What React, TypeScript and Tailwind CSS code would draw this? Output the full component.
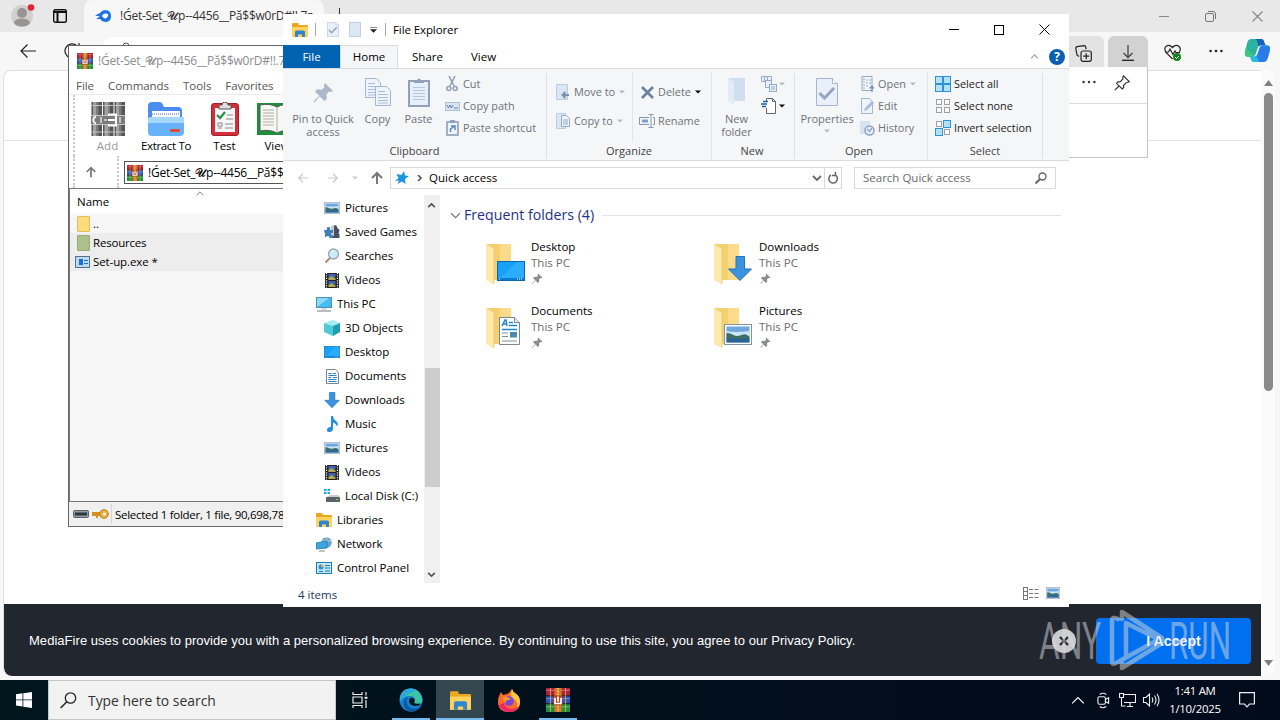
import type { ReactNode } from 'react'
import clsx from 'clsx'

type IconProps = { className?: string }

const ARCHIVE = '!Ǵet-Set_𝓤p--4456__Pă$$w0rD#!!.7z'

/* ---------- icons ---------- */

function WinRar({ className }: IconProps) {
  return (
    <svg viewBox="0 0 16 16" className={className}>
      <rect x="0" y="0" width="16" height="5.2" fill="#b01c3c" />
      <rect x="0" y="5.4" width="16" height="5" fill="#2b52bd" />
      <rect x="0" y="10.6" width="16" height="5.4" fill="#1f8f3c" />
      <path d="M0 1.6h16M0 7h16M0 12.4h16" stroke="#fff" strokeOpacity=".3" strokeWidth=".8" />
      <path d="M0 5.2h16M0 10.5h16" stroke="#222" strokeWidth=".7" />
      <path d="M3 0v16M13 0v16" stroke="#e9b44c" strokeOpacity=".7" strokeWidth=".8" />
      <rect x="5.6" width="4.8" height="16" fill="#cf7a28" />
      <path d="M8 0v5M8 12v4" stroke="#f5c162" strokeWidth="1.3" strokeDasharray="1 .8" />
      <rect x="5" y="5" width="6" height="6.4" fill="#b3471e" />
      <path d="M6 6.5v3.8h4V6.5M8 5.6v3.5" fill="none" stroke="#fff" strokeWidth="1.1" />
    </svg>
  )
}

function GrayArchive() {
  return (
    <svg viewBox="0 0 34 34" className="size-[34px]">
      {[0, 11.5, 23].map((x) => (
        <g key={x}>
          <rect x={x + 0.5} y="0" width="10.5" height="34" fill="#555" />
          <rect x={x + 2} y="0" width="3.5" height="34" fill="#a2a2a2" />
          <rect x={x + 5.5} y="0" width="2" height="34" fill="#7c7c7c" />
          <path d={`M${x + 0.5} 3.5h10.5M${x + 0.5} 30h10.5`} stroke="#c4c4c4" />
        </g>
      ))}
      <rect x="0" y="13" width="34" height="10" fill="#7b7b7b" />
      <path d="M0 13.5h34M0 22.5h34" stroke="#c8c8c8" />
      <path d="M5 14.5c-3.500 1-3.500 6 0 7" fill="none" stroke="#f0f0f0" strokeWidth="2" />
      <path d="M10 15v6M13 18h3M29 15v6" stroke="#e0e0e0" strokeWidth="1.5" />
      <path d="M17 12.500h8v11h-8M17 18h7" fill="none" stroke="#fff" strokeWidth="2" />
    </svg>
  )
}

function ExtractIcon() {
  return (
    <svg viewBox="0 0 36 34" className="h-[34px] w-9">
      <path d="M0 4q0-4 4-4h7q3 0 4 3l1 2h14q4 0 4 4v20H0z" fill="#4b8cf0" />
      <rect x="4" y="9" width="28" height="9" fill="#fff" />
      <path d="M4 12h28" stroke="#9fb4d8" strokeWidth="2" strokeDasharray="1 1" />
      <path d="M0 17q0-2 3-2h30q3 0 3 2v13q0 4-4 4H4q-4 0-4-4z" fill="#67b2f8" />
      <path d="M0 17q0-2 3-2h30q3 0 3 2v4H0z" fill="#a6d8fd" />
      <rect x="22" y="27" width="10" height="3" rx="1" fill="#e44a31" />
    </svg>
  )
}

function TestIcon() {
  return (
    <svg viewBox="0 0 28 34" className="h-[34px] w-7">
      <rect x=".5" y="1.5" width="27" height="32" rx="2.5" fill="#d62d3a" stroke="#a01f2b" />
      <rect x="4" y="6" width="20" height="24" fill="#f7f7f7" />
      <path d="M8 7V3h3q0-3 3-3t3 3h3v4z" fill="#ddd" stroke="#555" />
      <path d="M6 13l3 3 5-6" fill="none" stroke="#27924a" strokeWidth="2.2" />
      <path d="M16 13h6M15 17h7M7 26h4M14 22h8M14 26h8" stroke="#888" />
      <rect x="7" y="21" width="4" height="3" fill="none" stroke="#888" />
    </svg>
  )
}

function ViewIcon() {
  return (
    <svg viewBox="0 0 40 34" className="h-[34px] w-10">
      <path d="M0 1h40v32H0z" fill="#1d8f3b" />
      <path d="M3 3q10-2 17 2q7-4 17-2v26q-10-2-17 2q-7-4-17-2z" fill="#f8f8f2" stroke="#555" />
      <path d="M6 8h11M6 11h11M6 14h11M6 17h11M6 20h11M6 23h11M20 5v26" stroke="#aaa" />
    </svg>
  )
}

function ExplorerIcon({ className }: IconProps) {
  return (
    <svg viewBox="0 0 16 14" className={className}>
      <path d="M0 1q0-1 1-1h5l1 2h8q1 0 1 1v11H0z" fill="#e9a820" />
      <path d="M0 4h16v10H0z" fill="#ffd35c" />
      <path d="M3 14V9q0-1.5 1.5-1.500h7Q13 7.500 13 9v5h-3v-2.500H6V14z" fill="#2f86cf" />
    </svg>
  )
}

function PictureIcon({ className }: IconProps) {
  return (
    <svg viewBox="0 0 28 21" className={className} preserveAspectRatio="none">
      <rect x=".5" y=".5" width="27" height="20" fill="#fff" stroke="#8194a5" />
      <rect x="2.5" y="2.5" width="23" height="16" fill="#6ea8e0" />
      <path d="M2.500 7q8 2 23 0v5h-23z" fill="#cbe6f7" />
      <path d="M2.500 9q4 0 7 2t8 0 8 2v2h-23z" fill="#3d6f62" />
      <path d="M2.500 14.500h23v4h-23z" fill="#2b6394" />
    </svg>
  )
}

function DocumentIcon({ className }: IconProps) {
  return (
    <svg viewBox="0 0 21 28" className={className}>
      <path d="M.5.5h15l5 5v22H.5z" fill="#fff" stroke="#7b8790" />
      <path d="M15.500.5v5h5" fill="#e8eef3" stroke="#7b8790" />
      <path d="M3 9l3-6h1l1 6M4.500 7H7.500M10 5.500h4M10 8.500h8M3 12.500h15" fill="none" stroke="#1e86d0" strokeWidth="1.500" />
      <path d="M3 16h6M3 19.500h6M3 24h15" stroke="#7d8fa5" strokeWidth="1.200" />
      <rect x="11" y="15" width="7" height="5.500" fill="#4b8aae" />
    </svg>
  )
}

function SmallDocumentIcon() {
  return (
    <svg viewBox="0 0 13 15" className="h-[15px] w-[13px]">
      <path d="M.5.5h9l3 3v11H.5z" fill="#fff" stroke="#7b8790" />
      <path d="M2.500 4.500h3M7 4.500h3M2.500 6.500h8M2.500 8.500h3M7 8.500h4M2.500 10.500h8M2.500 12.500h8" stroke="#2a86c8" />
    </svg>
  )
}

function DesktopIcon({ className }: IconProps) {
  return (
    <svg viewBox="0 0 28 20" className={className} preserveAspectRatio="none">
      <rect x=".5" y=".5" width="27" height="19" fill="#17a1f8" stroke="#0b67b0" />
      <path d="M1 19L20 1h7v18z" fill="#2badfb" />
      <path d="M1 17h26v2H1z" fill="#0a7ed2" />
      <path d="M2 18h2M20 18h6" stroke="#fff" strokeDasharray="1 1" />
    </svg>
  )
}

function DownIcon({ className }: IconProps) {
  return (
    <svg viewBox="0 0 24 25" className={className}>
      <path d="M8 .5h8.500V13H23.500L12 24.500.5 13H8z" fill="#3a93dc" stroke="#2373b8" />
    </svg>
  )
}

function VideoIcon({ className }: IconProps) {
  return (
    <svg viewBox="0 0 14 15" className={className}>
      <rect width="14" height="15" fill="#222" />
      <path d="M1.500 0v15M12.500 0v15" stroke="#eee" strokeWidth="1.300" strokeDasharray="1.200 1.200" />
      <rect x="3.500" y="1" width="7" height="6" fill="#4264b8" />
      <rect x="3.500" y="8" width="7" height="6" fill="#3d61ae" />
      <path d="M3.500 5l3-2 4 3v1h-7zM3.500 12l3-2 4 3v1h-7z" fill="#b0a84a" />
    </svg>
  )
}

function GamesIcon({ className }: IconProps) {
  return (
    <svg viewBox="0 0 16 14" className={className}>
      <path d="M9 1l3-1 1.500 3 2 2-1 4h1v4H9z" fill="#46525c" />
      <path d="M7 1l3-1v11H7z" fill="#c4ccd2" />
      <path d="M0 5h3q-1-3 1.500-3T6 5h3v3q-2-1-2 1t2 1v3H5q1-2-1-2t-2 1H1V9z" fill="#3a7fc0" />
    </svg>
  )
}

function SearchesIcon({ className }: IconProps) {
  return (
    <svg viewBox="0 0 16 16" className={className}>
      <path d="M6.500 9.500L1.500 14.500" stroke="#b08a6a" strokeWidth="2" />
      <circle cx="9.500" cy="6" r="5" fill="#cdeafa" stroke="#95a5b2" strokeWidth="1.300" />
      <path d="M7 5q1-2 3-2" stroke="#fff" fill="none" />
    </svg>
  )
}

function PcIcon({ className }: IconProps) {
  return (
    <svg viewBox="0 0 16 15" className={className}>
      <rect x=".5" y=".5" width="15" height="10" fill="#45bdf2" stroke="#4d8fb3" />
      <path d="M1 10V1h12z" fill="#8adafa" />
      <path d="M5 12h6" stroke="#b0bcc4" />
      <path d="M1 14h14" stroke="#6e7b84" />
    </svg>
  )
}

function CubeIcon({ className }: IconProps) {
  return (
    <svg viewBox="0 0 16 16" className={className}>
      <path d="M0 3l9-3 7 3-7 3z" fill="#a4eef2" />
      <path d="M0 3l9 3v10l-9-4z" fill="#4fcbd6" />
      <path d="M16 3L9 6v10l7-4z" fill="#1f9fb4" />
    </svg>
  )
}

function MusicIcon({ className }: IconProps) {
  return (
    <svg viewBox="0 0 12 16" className={className}>
      <path d="M5 0h2q0 3 3 5t1 6q0-3-4-4.500V13q-.5 3-3.500 3T1 13.500 4 11h1z" fill="#1f8fdf" />
    </svg>
  )
}

function DiskIcon({ className }: IconProps) {
  return (
    <svg viewBox="0 0 16 14" className={className}>
      <path d="M0 0h2.500v2H0zM3.500 0H6v2H3.500zM0 3h2.500v2H0zM3.500 3H6v2H3.500z" fill="#18a8e0" />
      <path d="M3 8l3-2h8l2 2z" fill="#c7ccd0" />
      <rect x="2" y="8" width="14" height="5" rx=".8" fill="#5a6268" />
      <rect x="12" y="10" width="2" height="1" fill="#5df05d" />
    </svg>
  )
}

function NetworkIcon({ className }: IconProps) {
  return (
    <svg viewBox="0 0 16 15" className={className}>
      <circle cx="10.500" cy="5.500" r="5.200" fill="#6aa5c8" />
      <path d="M6 4h10M10.500 0v10" stroke="#c3e0ef" strokeWidth=".8" />
      <path d="M0 6l11-2v7L0 12z" fill="#3aa5e0" stroke="#2475a8" strokeWidth=".8" />
      <path d="M3 14h6" stroke="#7c8990" />
    </svg>
  )
}

function ControlIcon({ className }: IconProps) {
  return (
    <svg viewBox="0 0 16 12" className={className}>
      <rect x=".5" y=".5" width="15" height="11" fill="#bfe6fa" stroke="#1f7fb8" />
      <circle cx="5" cy="5" r="2.500" fill="#2b92d0" />
      <path d="M5 5V2.500A2.500 2.500 0 0 1 7.500 5z" fill="#f5a742" />
      <path d="M9 3.500h5M9 6h5M3 9.500h4M9 9h5" stroke="#2878ac" />
    </svg>
  )
}

function Pin({ className }: IconProps) {
  return (
    <svg viewBox="0 0 22 22" className={className}>
      <path d="M12.500 1l8.500 8.500-2.500 1-2-.3-2.500 3 .5 4.300L12 20l-5-5-5.500 6.500L.5 20.500 6.500 14.500 2 10l2.500-2.500 4.500.5 3-2.500-.5-2z" fill="currentColor" />
    </svg>
  )
}

function Caret({ className }: IconProps) {
  return (
    <svg viewBox="0 0 6 4" className={clsx('h-1 w-1.5 shrink-0', className)}>
      <path d="M0 .5h6L3 3.500z" fill="currentColor" />
    </svg>
  )
}

function Chevron({ className, d = 'M1 1l4 4 4-4', w = 1.6 }: IconProps & { d?: string; w?: number }) {
  return (
    <svg viewBox="0 0 10 6" className={className}>
      <path d={d} fill="none" stroke="currentColor" strokeWidth={w} />
    </svg>
  )
}

function Arrow({ className, dir }: IconProps & { dir: 'left' | 'right' | 'up' }) {
  const d = { left: 'M13 7H2M7 2L2 7l5 5', right: 'M1 7h11M7 2l5 5-5 5', up: 'M7 13V2M2 7l5-5 5 5' }[dir]
  return (
    <svg viewBox="0 0 14 14" className={className}>
      <path d={d} fill="none" stroke="currentColor" strokeWidth={dir === 'up' ? 2 : 1.4} />
    </svg>
  )
}

function Folder({ children }: { children: ReactNode }) {
  return (
    <div className="relative h-[42px] w-10 shrink-0">
      <svg viewBox="0 0 40 42" className="h-[42px] w-10">
        <path d="M0 1h25v36H5z" fill="#f3d070" />
        <path d="M25 1v36H14V1z" fill="#f9db8a" />
        <path d="M0 1l8 5v35.500L0 37z" fill="#fde9ab" />
        <path d="M8 6v35" stroke="#e8c463" strokeWidth=".7" />
      </svg>
      {children}
    </div>
  )
}

/* ---------- Edge ---------- */

function Edge() {
  return (
    <div className="absolute inset-x-0 top-0 flex h-[680px] flex-col bg-[#f7f7f7]">
      <div className="flex h-8 shrink-0 items-center justify-between bg-[#e8e8e8]">
        <div className="flex h-8 items-center">
          <svg viewBox="0 0 26 26" className="ml-[9px] size-[26px]">
            <circle cx="13" cy="13" r="11" fill="#d2d0ce" />
            <circle cx="13" cy="10" r="5" fill="#979593" />
            <ellipse cx="13" cy="19.500" rx="8" ry="4" fill="#979593" />
            <circle cx="22" cy="4.500" r="3.300" fill="#e02434" />
          </svg>
          <svg viewBox="0 0 14 14" className="ml-[18px] size-[14px]">
            <rect x=".7" y=".7" width="12.600" height="12.600" rx="1.500" fill="none" stroke="#111" strokeWidth="1.400" />
            <path d="M1 3h12M4.500 3v10" stroke="#111" strokeWidth="2" />
          </svg>
          <div className="ml-[17px] flex h-8 w-[240px] items-center overflow-hidden rounded-t-lg bg-[#f7f7f7] pl-[11px]">
            <svg viewBox="0 0 16 12" className="h-3 w-4 shrink-0">
              <path d="M0 5.500L5 3Q7 0 10 0q6 0 6 6t-6 6q-3 0-5-3L1 9l4-2.500z" fill="#1d72e8" />
              <path d="M7 6q1-3 4-2.500T13 6t-2.500 2.500T7 6z" fill="#fff" />
            </svg>
            <span className="ml-[9px] text-[12px] tracking-[-0.25px] whitespace-nowrap text-[#333]">{ARCHIVE}</span>
          </div>
          <span className="ml-[15px] h-4 w-px bg-[#333]" />
        </div>
        <div className="flex items-center gap-9 pr-[17px] text-[#888]">
          <span className="h-px w-2.5 bg-[#888]" />
          <svg viewBox="0 0 11 11" className="size-[11px]" fill="none" stroke="#777">
            <rect x=".5" y="2.500" width="8" height="8" rx="1.500" />
            <path d="M3 .5h5q2.500 0 2.500 2.500v5" />
          </svg>
          <svg viewBox="0 0 11 11" className="size-[11px]">
            <path d="M.5.5l10 10M10.500.5l-10 10" stroke="#888" strokeWidth="1.200" />
          </svg>
        </div>
      </div>

      <div className="flex h-[38px] shrink-0 items-center justify-between">
        <div className="flex items-center self-stretch">
          <svg viewBox="0 0 16 14" className="ml-5 h-3.5 w-4">
            <path d="M16 7H1M7.500.5L1 7l6.500 6.500" fill="none" stroke="#222" strokeWidth="1.200" />
          </svg>
          <svg viewBox="0 0 16 16" className="ml-7 size-4">
            <path d="M15 8a7 7 0 1 1-2-5M15 0v4h-4" fill="none" stroke="#222" strokeWidth="1.200" />
          </svg>
          <div className="ml-[21px] flex h-7 w-[700px] items-center self-center rounded-full bg-white pl-5 text-[#444]">
            <svg viewBox="0 0 10 14" className="-mt-1 h-3.5 w-2.5">
              <path d="M2 7V4q0-3 3-3t3 3v3M1 7h8v6H1z" fill="none" stroke="#555" />
            </svg>
          </div>
        </div>
        <div className="flex h-full items-end">
          <div className="flex h-[34px] w-[45px] items-center justify-center rounded-t-md bg-[#e3e3e3] pl-1">
            <svg viewBox="0 0 17 17" className="size-[17px]" fill="none" stroke="#222" strokeWidth="1.200">
              <path d="M4 11.500L2 10 .8 3.500Q.7 2 2 1.700L9 .7q1.500 0 1.800 1.500l.2 2" />
              <rect x="6" y="6" width="10.300" height="10.300" rx="2" />
              <path d="M11.200 8.300v6M8.200 11.200h6" />
            </svg>
          </div>
          <div className="ml-1 flex h-[34px] w-10 items-center justify-center rounded-t-md bg-[#d2d2d2]">
            <svg viewBox="0 0 14 16" className="h-4 w-3.5">
              <path d="M7 0v12M2.500 8L7 12.500 11.500 8" fill="none" stroke="#444" strokeWidth="1.300" />
              <path d="M1 15.300h12" stroke="#222" strokeWidth="1.300" />
            </svg>
          </div>
          <svg viewBox="0 0 17 17" className="mb-[9px] ml-4 size-[17px]">
            <path d="M8.500 15L2 8.500Q-.5 4 2.500 2T8.500 3.500Q11.500 0 14.500 2T15.500 8M1 8h3.500L6 5l3 5.500L11 7l1 1.500h4" fill="none" stroke="#222" strokeWidth="1.200" />
            <circle cx="13" cy="13" r="4" fill="#16821c" />
            <path d="M11 13l1.500 1.500L15 12" stroke="#fff" fill="none" />
          </svg>
          <svg viewBox="0 0 14 4" className="mb-[17px] ml-7 h-1 w-3.5" fill="#222">
            <circle cx="1.600" cy="2" r="1.300" />
            <circle cx="7" cy="2" r="1.300" />
            <circle cx="12.400" cy="2" r="1.300" />
          </svg>
          <svg viewBox="0 0 24 24" className="mr-2.5 mb-[7px] ml-[22px] size-[25px]">
            <path d="M6 1h9q3 0 3 3l1 3h-4q-2 0-3 3l-2 6q-1 2-3 2H3q-4 0-3-5l2-8q1-4 4-4z" fill="#2bb3a0" />
            <path d="M12 1h3q3 0 3.500 3L20 7h-5l-2 1q-.5-2-1-4-.5-2-2-3z" fill="#1762b8" />
            <path d="M0 14q.5-3 1-5 5 6 8 8-1 1-2 1H3q-4 0-3-4z" fill="#38c878" />
            <path d="M18 23H9q-3 0-3-3l-1-2h4q2 0 3-3l2-6q1-2 3-2h4q4 0 3 5l-2 7q-1 4-4 4z" fill="#2b7ce9" />
            <path d="M12 23H9q-3 0-3.500-3L5 18h4l2-1q.5 2 1 3 .5 2 2 3z" fill="#22bfe0" />
          </svg>
        </div>
      </div>

      <div className="flex h-[606px] shrink-0">
        <div className="ml-[3px] flex w-[1258px] flex-col overflow-hidden rounded-tl-lg rounded-bl-lg border-t border-l border-[#dedede] bg-white">
          <div className="h-[70px] shrink-0 border-b border-[#e4e4e4]" />
          <div className="h-[463px] shrink-0" />
          <div className="flex h-[72px] shrink-0 items-center rounded-bl-lg bg-[#22262f] pt-0.5 pl-[25px]">
            <span className="w-[1023px] font-['Liberation_Sans'] text-[13px] tracking-[0.04px] whitespace-nowrap text-white">
              MediaFire uses cookies to provide you with a personalized browsing experience. By continuing to use this site, you agree to our Privacy Policy.
            </span>
            <span className="flex size-6 shrink-0 items-center justify-center rounded-full bg-[#c9cacc]">
              <svg viewBox="0 0 10 10" className="size-2.5">
                <path d="M1 1l8 8M9 1L1 9" stroke="#222" strokeWidth="2.200" />
              </svg>
            </span>
            <span className="ml-5 flex h-[46px] w-[155px] shrink-0 items-center justify-center rounded bg-[#0070f0] font-['Liberation_Sans'] text-[14px] font-bold tracking-[0.1px] text-white">
              I Accept
            </span>
          </div>
        </div>
        <div className="flex w-[14px] flex-col items-center rounded-r-lg bg-[#fbfbfb]">
          <svg viewBox="0 0 9 6" className="mt-2.5 h-1.5 w-[9px]"><path d="M0 6h9L4.500 0z" fill="#808080" /></svg>
          <div className="mt-[7px] h-[298px] w-[9px] rounded-full bg-[#8a8a8a]" />
          <svg viewBox="0 0 9 6" className="mt-auto mb-2.5 h-1.5 w-[9px]"><path d="M0 0h9L4.500 6z" fill="#808080" /></svg>
        </div>
      </div>
    </div>
  )
}

function DownloadsFlyout() {
  return (
    <div className="absolute top-[67px] left-[868px] flex h-[91px] w-[280px] flex-col border-r border-b border-[#c4c4c4] bg-white">
      <div className="flex h-[37px] items-start justify-end border-b border-[#dcdcdc] pr-[17px]">
        <svg viewBox="0 0 14 4" className="mt-[13px] mr-[18px] h-1 w-3.5" fill="#333">
          <circle cx="1.600" cy="2" r="1.200" />
          <circle cx="7" cy="2" r="1.200" />
          <circle cx="12.400" cy="2" r="1.200" />
        </svg>
        <svg viewBox="0 0 16 16" className="mt-2 size-4">
          <path d="M9.500.8l5.700 5.700-1.500 1-1.500.2-2.700 2.800.2 2-1.500 1.500L2.500 8.300 4 6.800l2 .1 2.800-2.700.1-2zM5 11L.8 15.200" fill="none" stroke="#333" strokeWidth="1.200" />
        </svg>
      </div>
    </div>
  )
}

/* ---------- WinRAR ---------- */

function ToolButton({ icon, label, className }: { icon: ReactNode; label: string; className?: string }) {
  return (
    <div className={clsx('flex shrink-0 flex-col items-center text-[11.5px]', className)}>
      {icon}
      <span className="mt-0.5 leading-[16px] whitespace-nowrap">{label}</span>
    </div>
  )
}

function WinRarWindow() {
  return (
    <div className="absolute top-[45px] left-[68px] flex h-[482px] w-[420px] flex-col overflow-hidden border border-[#666] bg-white text-[11.5px] text-black">
      <div className="flex h-[30px] shrink-0 items-center pl-2 text-[12px] tracking-[-0.25px] text-[#8c8c8c]">
        <WinRar className="size-4" />
        <span className="ml-[5px] whitespace-nowrap">{ARCHIVE}</span>
      </div>
      <div className="flex h-[19px] shrink-0 items-center gap-3.5 border-b border-[#ececec] pt-px pl-[7px] tracking-[-0.05px] text-[#555]">
        <span>File</span>
        <span>Commands</span>
        <span>Tools</span>
        <span>Favorites</span>
      </div>
      <div className="ml-1 flex h-[61px] shrink-0 border-l-2 border-dotted border-[#c9c9c9] pt-[7px] pl-px">
        <ToolButton className="w-[63px] text-[#999]" icon={<GrayArchive />} label="Add" />
        <ToolButton className="w-[54px] tracking-[-0.35px]" icon={<ExtractIcon />} label="Extract To" />
        <ToolButton className="w-[63px]" icon={<TestIcon />} label="Test" />
        <ToolButton className="w-[42px]" icon={<ViewIcon />} label="View" />
      </div>
      <div className="ml-1 flex h-8 shrink-0 items-center border-l-2 border-dotted border-[#c9c9c9]">
        <Arrow dir="up" className="ml-2.5 size-3 text-[#777]" />
        <div className="ml-5 flex h-full items-center border-l-2 border-dotted border-[#c9c9c9] pt-px pl-[5px]">
          <div className="flex h-[23px] w-[320px] items-center border border-[#555] pl-[2px] text-[12px] tracking-[-0.25px]">
            <WinRar className="size-4" />
            <span className="ml-[5px] whitespace-nowrap">{ARCHIVE}</span>
          </div>
        </div>
      </div>
      <div className="flex h-[314px] shrink-0 flex-col border-y border-l border-[#777] bg-[#f6f6f6]">
        <div className="flex h-[25px] items-start bg-white pl-[7px]">
          <span className="w-[118px] pt-1 leading-[17px]">Name</span>
          <Chevron d="M1 5l4-4 4 4" w={1} className="mt-0.5 h-[5px] w-[10px] text-[#666]" />
        </div>
        <div className="flex h-[19px] items-center gap-[3px] pl-[7px]">
          <span className="h-4 w-[13px] rounded-[1px] border border-[#e2bd55] bg-[#fbdc7c]" />
          <span>..</span>
        </div>
        <div className="flex h-[19px] items-center gap-[3px] bg-[#ededed] pl-[7px] tracking-[-0.2px]">
          <span className="h-4 w-[13px] rounded-[1px] border border-[#98aa78] bg-[#adc08c]" />
          <span>Resources</span>
        </div>
        <div className="flex h-[19px] items-center gap-[3px] bg-[#ededed] pl-[5px] tracking-[-0.1px]">
          <svg viewBox="0 0 15 12" className="h-3 w-[15px]">
            <rect x=".5" y=".5" width="14" height="11" fill="#bcd9ee" stroke="#54748c" />
            <rect x="4" y="3" width="4" height="6" fill="#1370d0" />
            <path d="M9 4.500h4M9 7.500h4" stroke="#1370d0" />
          </svg>
          <span>Set-up.exe *</span>
        </div>
      </div>
      <div className="flex grow items-center bg-[#f0f0f0] pl-1">
        <svg viewBox="0 0 16 8" className="h-2 w-4">
          <rect x=".5" y=".5" width="15" height="7" rx="1" fill="#8f9ba5" stroke="#59636b" />
          <path d="M2 4h12" stroke="#2b3640" strokeWidth="3" />
        </svg>
        <svg viewBox="0 0 17 10" className="ml-[3px] h-2.5 w-[17px]">
          <path d="M0 3h9v4H6v2H4V7H0z" fill="#d99022" />
          <circle cx="12" cy="5" r="4.300" fill="#eeb144" stroke="#b97716" />
          <circle cx="12.500" cy="5" r="1.500" fill="#fff" />
        </svg>
        <span className="ml-0.5 flex h-5 items-center border-l border-[#d5d5d5] pt-0.5 pl-[3px] tracking-[-0.28px] whitespace-nowrap">
          Selected 1 folder, 1 file, 90,698,784 bytes
        </span>
      </div>
    </div>
  )
}

/* ---------- File Explorer ---------- */

function RibbonGroup({ label, className, children }: { label: string; className: string; children: ReactNode }) {
  return (
    <div className={clsx('mt-1 mb-0.5 flex h-[86px] shrink-0 flex-col border-r border-[#dfe3e7]', className)}>
      <div className="flex h-[69px]">{children}</div>
      <span className="text-center text-[11px] leading-[17px] text-[#444]">{label}</span>
    </div>
  )
}

function SmallButton({ icon, label, caret }: { icon: ReactNode; label?: string; caret?: string }) {
  return (
    <div className="flex h-[22px] items-center text-[10.9px] whitespace-nowrap">
      <span className="mr-[3px] flex w-4 shrink-0 justify-center">{icon}</span>
      {label}
      {caret && <Caret className={clsx(label ? 'ml-1' : '-ml-px', caret)} />}
    </div>
  )
}

function BigButton({ icon, label, className, caret }: { icon: ReactNode; label: string; className: string; caret?: boolean }) {
  return (
    <div className={clsx('flex shrink-0 flex-col items-center pt-[3px] text-center text-[11px] leading-[13px] text-[#6d7278]', className)}>
      <span className="mb-1 flex h-8 items-center">{icon}</span>
      {label}
      {caret && <Caret className="mt-1 text-[#b4b8bd]" />}
    </div>
  )
}

function Sheet({ className, check }: IconProps & { check?: boolean }) {
  return (
    <svg viewBox="0 0 22 28" className={className}>
      <path d="M.5.5h16l5 5v22H.5z" fill="#e9f0fa" stroke="#a5b6d2" />
      <path d="M16.500.5v5h5" fill="#fff" stroke="#a5b6d2" />
      {check && <path d="M3.500 15l5 5 9.500-10" fill="none" stroke="#94a6c4" strokeWidth="3" />}
    </svg>
  )
}

function TextSheet({ className }: IconProps) {
  return (
    <svg viewBox="0 0 16 20" className={className}>
      <path d="M.5.5h11l4 4v15H.5z" fill="#eef4fc" stroke="#a5b6d2" />
      <path d="M3 5.500h7M3 8.500h10M3 11.500h10M3 14.500h10M3 17h10" stroke="#a9bbdb" />
    </svg>
  )
}

function SelectIcon({ on }: { on: boolean[] }) {
  return (
    <span className="grid grid-cols-2">
      {on.map((v, i) => (
        <span
          key={i}
          className={clsx('border', v ? 'size-2 border-[#2b93d8] bg-[#b5e0fa]' : 'm-px size-1.5 border-[#a0a0a0] bg-white')}
        />
      ))}
    </span>
  )
}

function Ribbon() {
  const dim = 'text-[#6d7278]'
  return (
    <div className="flex h-[93px] shrink-0 border-y border-[#d9dcdf] bg-[#f5f6f8]">
      <RibbonGroup label="Clipboard" className="w-[264px]">
        <BigButton className="w-20" icon={<Pin className="size-[21px] text-[#aab8c8]" />} label="Pin to Quick access" />
        <BigButton
          className="w-[29px]"
          icon={
            <span className="flex">
              <TextSheet className="-mr-1.5 mb-2 h-5 w-4" />
              <TextSheet className="mt-2 h-5 w-4" />
            </span>
          }
          label="Copy"
        />
        <BigButton
          className="w-[53px]"
          icon={
            <svg viewBox="0 0 22 29" className="h-[29px] w-[22px]">
              <rect x="1" y="3" width="20" height="25" fill="#e6effb" stroke="#8fa0b8" strokeWidth="2" />
              <path d="M6 5V2h3q2-3 4 0h3v3z" fill="#8fa0b8" />
              <path d="M5 9.500h12M5 12.500h12M5 15.500h12M5 18.500h12M5 21.500h12" stroke="#b4c6e0" />
            </svg>
          }
          label="Paste"
        />
        <div className={clsx('-ml-px flex flex-col', dim)}>
          <SmallButton
            label="Cut"
            icon={
              <svg viewBox="0 0 12 16" className="h-4 w-3" fill="none" stroke="#93a3b5" strokeWidth="1.600">
                <path d="M3 0l5 10M9 0L4 10" />
                <circle cx="2.800" cy="12.500" r="2" />
                <circle cx="9.200" cy="12.500" r="2" />
              </svg>
            }
          />
          <SmallButton
            label="Copy path"
            icon={
              <svg viewBox="0 0 15 9" className="h-[9px] w-[15px]">
                <rect x=".5" y=".5" width="14" height="8" fill="#d9e4f3" stroke="#b1c0d5" />
                <path d="M2 3l1.500 3L5 3l1.500 3L8 3M9 6h4" fill="none" stroke="#6680a5" />
              </svg>
            }
          />
          <SmallButton
            label="Paste shortcut"
            icon={
              <svg viewBox="0 0 13 16" className="h-4 w-[13px]">
                <rect x="1" y="2" width="11" height="13" fill="#eef4fc" stroke="#8fa0b8" strokeWidth="1.600" />
                <rect x="4" y="0" width="5" height="3" fill="#8fa0b8" />
                <path d="M4.500 12V9L8 6.500M5 6h4v4" fill="none" stroke="#5b86c0" strokeWidth="1.500" />
              </svg>
            }
          />
        </div>
      </RibbonGroup>

      <RibbonGroup label="Organize" className="w-[165px]">
        <div className={clsx('flex w-[85px] flex-col gap-[7px] pt-2 pl-2', dim)}>
          <SmallButton
            label="Move to"
            caret="text-[#b4b8bd]"
            icon={
              <svg viewBox="0 0 14 16" className="h-4 w-3.5">
                <path d="M.5.5h11v15H.5z" fill="#dbe6f5" stroke="#bccbe0" />
                <path d="M13 11H7M9.500 8L6.500 11l3 3" fill="none" stroke="#7890b3" strokeWidth="2" />
              </svg>
            }
          />
          <SmallButton
            label="Copy to"
            caret="text-[#b4b8bd]"
            icon={
              <svg viewBox="0 0 14 16" className="h-4 w-3.5">
                <path d="M.5.5h9v15h-9z" fill="#dbe6f5" stroke="#bccbe0" />
                <path d="M5.500 2.500h5l3 3v8h-8z" fill="#eef4fc" stroke="#94a8c8" />
                <path d="M7 7h5M7 9h5M7 11h5" stroke="#94a8c8" />
              </svg>
            }
          />
        </div>
        <div className={clsx('flex flex-col gap-[7px] border-l border-[#e1e5e9] pt-2 pl-1.5', dim)}>
          <SmallButton
            label="Delete"
            caret="text-black"
            icon={
              <svg viewBox="0 0 13 13" className="size-[13px]">
                <path d="M1 1l11 11M12 1L1 12" stroke="#6a829e" strokeWidth="2.600" />
              </svg>
            }
          />
          <SmallButton
            label="Rename"
            icon={
              <svg viewBox="0 0 16 14" className="h-3.5 w-4" fill="none" stroke="#8197b5">
                <path d="M10 3.500H.5v7H10M14 3.500h1.500v7H14M9.500.5h5M9.500 13.500h5M12 1v12" />
                <path d="M3 7h6" stroke="#7d9fcd" strokeWidth="3" />
              </svg>
            }
          />
        </div>
      </RibbonGroup>

      <RibbonGroup label="New" className="w-[83px] pr-0.5">
        <BigButton
          className="w-[49px] px-1"
          icon={
            <svg viewBox="0 0 18 28" className="h-7 w-[18px]">
              <path d="M0 0h17v23H6z" fill="#cfdff0" />
              <path d="M0 0l6 4v23l-6-4z" fill="#e2ecf7" />
            </svg>
          }
          label="New folder"
        />
        <div className="flex flex-col">
          <SmallButton
            caret="text-[#b4b8bd]"
            icon={
              <svg viewBox="0 0 16 16" className="size-4" fill="#e6effb" stroke="#98abc8">
                <path d="M.5.5h10v5H.5zM3.500.5v5M6.500.5v5" />
                <rect x="4.500" y="4.500" width="6" height="7" />
                <rect x="8.500" y="8.500" width="7" height="7" />
                <path d="M10 11h4M10 13h4" />
              </svg>
            }
          />
          <SmallButton
            caret="text-black"
            icon={
              <svg viewBox="0 0 16 16" className="size-4" fill="none">
                <path d="M5.500 4V.5h6l3 3v12h-9V10" fill="#fff" stroke="#666" />
                <path d="M11.500.5v3h3" stroke="#666" />
                <path d="M2 3.500h5M0 6h6M1 8.500h4" stroke="#1d5ea8" strokeWidth="1.300" />
              </svg>
            }
          />
        </div>
      </RibbonGroup>

      <RibbonGroup label="Open" className="w-[133px] pr-1">
        <BigButton className="w-16" icon={<Sheet check className="h-7 w-[22px]" />} label="Properties" caret />
        <div className={clsx('flex flex-col', dim)}>
          <SmallButton
            label="Open"
            caret="text-[#b4b8bd]"
            icon={
              <svg viewBox="0 0 13 16" className="h-4 w-[13px]">
                <path d="M1 .5h10v14H1z" fill="#f4f8fd" stroke="#94a6c4" />
                <path d="M3 2v11M5 4h5M5 7h5M5 10h3" stroke="#94a6c4" strokeDasharray="2 1" />
                <path d="M11 16v-6M8.500 12.500L11 10l2 2.500" stroke="#7f95bb" fill="none" strokeWidth="1.400" />
              </svg>
            }
          />
          <SmallButton
            label="Edit"
            icon={
              <svg viewBox="0 0 13 16" className="h-4 w-[13px]">
                <path d="M.5.5h8l3 3v12H.5z" fill="#eef4fc" stroke="#a5b6d2" />
                <path d="M3 13l1-3 7-7 2 2-7 7z" fill="#a9bbd8" />
              </svg>
            }
          />
          <SmallButton
            label="History"
            icon={
              <svg viewBox="0 0 15 15" className="size-[15px]">
                <path d="M0 0h10v13H0z" fill="#d7e3f2" />
                <circle cx="9.500" cy="9.500" r="4.500" fill="#e8eff8" stroke="#8ea3c2" strokeWidth="1.500" />
                <path d="M7 8l2.500 2.500L12 7" stroke="#8ea3c2" fill="none" strokeWidth="1.300" />
              </svg>
            }
          />
        </div>
      </RibbonGroup>

      <RibbonGroup label="Select" className="w-[115px]">
        <div className="flex flex-col pl-[7px] text-[#222]">
          <SmallButton label="Select all" icon={<SelectIcon on={[true, true, true, true]} />} />
          <SmallButton label="Select none" icon={<SelectIcon on={[false, false, false, false]} />} />
          <SmallButton label="Invert selection" icon={<SelectIcon on={[false, true, true, false]} />} />
        </div>
      </RibbonGroup>
    </div>
  )
}

const tree: { label: string; icon: ReactNode; root?: boolean }[] = [
  { label: 'Pictures', icon: <PictureIcon className="h-3 w-4" /> },
  { label: 'Saved Games', icon: <GamesIcon className="h-3.5 w-4" /> },
  { label: 'Searches', icon: <SearchesIcon className="size-4" /> },
  { label: 'Videos', icon: <VideoIcon className="h-[15px] w-3.5" /> },
  { label: 'This PC', icon: <PcIcon className="h-[15px] w-4" />, root: true },
  { label: '3D Objects', icon: <CubeIcon className="size-4" /> },
  { label: 'Desktop', icon: <DesktopIcon className="h-3 w-4" /> },
  { label: 'Documents', icon: <SmallDocumentIcon /> },
  { label: 'Downloads', icon: <DownIcon className="size-4" /> },
  { label: 'Music', icon: <MusicIcon className="h-4 w-3" /> },
  { label: 'Pictures', icon: <PictureIcon className="h-3 w-4" /> },
  { label: 'Videos', icon: <VideoIcon className="h-[15px] w-3.5" /> },
  { label: 'Local Disk (C:)', icon: <DiskIcon className="h-3.5 w-4" /> },
  { label: 'Libraries', icon: <ExplorerIcon className="h-3.5 w-4" />, root: true },
  { label: 'Network', icon: <NetworkIcon className="h-[15px] w-4" />, root: true },
  { label: 'Control Panel', icon: <ControlIcon className="h-3 w-4" />, root: true },
]

const folders = [
  { name: 'Desktop', badge: <DesktopIcon className="absolute top-[18px] left-[11px] h-5 w-7" /> },
  { name: 'Downloads', badge: <DownIcon className="absolute top-[13px] left-[14px] h-[25px] w-6" /> },
  { name: 'Documents', badge: <DocumentIcon className="absolute top-[10px] left-[13px] h-7 w-[21px]" /> },
  { name: 'Pictures', badge: <PictureIcon className="absolute top-[17px] left-[10px] h-[21px] w-7" /> },
]

function Explorer() {
  return (
    <div className="absolute top-[14px] left-[283px] flex h-[593px] w-[786px] flex-col overflow-hidden bg-white text-[11.5px] text-black">
      <div className="flex h-[31px] shrink-0 items-center justify-between">
        <div className="flex items-center">
          <ExplorerIcon className="ml-[9px] h-3.5 w-4" />
          <span className="ml-[7px] h-[13px] w-px bg-[#aaa]" />
          <Sheet check className="ml-[11px] h-[15px] w-3" />
          <span className="ml-2.5 h-[15px] w-3 border border-[#c3d0e2] bg-[#dde8f5]" />
          <svg viewBox="0 0 7 6" className="ml-[9px] h-1.5 w-[7px]"><path d="M0 .5h7M.5 2.500h6L3.500 5.500z" fill="#222" stroke="#222" strokeWidth=".5" /></svg>
          <span className="ml-2 h-[13px] w-px bg-[#aaa]" />
          <span className="ml-[7px] tracking-[-0.1px]">File Explorer</span>
        </div>
        <div className="flex items-center gap-[35px] pr-[19px]">
          <span className="h-px w-2.5 bg-black" />
          <span className="size-2.5 border border-black" />
          <svg viewBox="0 0 11 11" className="size-[11px]"><path d="M.5.5l10 10M10.500.5l-10 10" stroke="#000" /></svg>
        </div>
      </div>

      <div className="flex h-[23px] shrink-0 items-stretch justify-between">
        <div className="flex">
          <span className="flex w-[57px] items-center justify-center bg-[#0063b1] text-white">File</span>
          <span className="-mb-px flex w-[58px] items-center justify-center border-x border-t border-[#d9dcdf] bg-[#f5f6f8] pb-0.5">Home</span>
          <span className="flex w-[59px] items-center justify-center">Share</span>
          <span className="flex w-[53px] items-center justify-center">View</span>
        </div>
        <div className="flex items-center gap-2.5 pr-1">
          <Chevron d="M1 5l4-4 4 4" className="h-[5px] w-[9px] text-[#aaa]" />
          <span className="flex size-4 items-center justify-center rounded-full bg-[#0a5fb0] text-[12px] font-bold text-white">?</span>
        </div>
      </div>

      <Ribbon />

      <div className="flex h-[34px] shrink-0 items-center pl-[14px] text-[#bbb]">
        <Arrow dir="left" className="size-3 text-[#ccc]" />
        <Arrow dir="right" className="ml-[18px] size-3 text-[#ccc]" />
        <Caret className="ml-[13px] text-[#ccc]" />
        <Arrow dir="up" className="ml-3 size-3.5 text-[#777]" />
        <div className="ml-1.5 flex h-[22px] w-[435px] items-center border border-[#d9d9d9] text-black">
          <svg viewBox="0 0 14 14" className="ml-1 size-3.5">
            <path d="M9 0l1 4.500 4 .5-4 3 .5 5-3.500-2.500L2.500 13l1.500-3.500L0 10l3.500-3L1.500 3l5 1z" fill="#1e94e0" />
          </svg>
          <Chevron d="M3 0l3 3-3 3" className="ml-1.5 h-1.5 w-2.5 text-[#555]" />
          <span className="ml-1">Quick access</span>
        </div>
        <div className="-ml-px flex h-[22px] w-[18px] items-center justify-center border border-[#d9d9d9]">
          <svg viewBox="0 0 12 12" className="size-3"><path d="M8.500 3.200A4.300 4.300 0 1 1 4 3M8.500 0v3.500H5" fill="none" stroke="#666" strokeWidth="1.500" /></svg>
        </div>
        <Chevron className="-ml-[30px] h-1.5 w-2.5 text-[#666]" w={1.800} />
        <div className="ml-8 flex h-[22px] w-[202px] items-center justify-between border border-[#d9d9d9] pr-2 pl-2 text-[#6a6a6a]">
          <span>Search Quick access</span>
          <svg viewBox="0 0 12 12" className="size-3"><circle cx="7.500" cy="4.500" r="3.500" fill="none" stroke="#666" strokeWidth="1.400" /><path d="M5 7L.5 11.500" stroke="#666" strokeWidth="2" /></svg>
        </div>
      </div>

      <div className="flex h-[388px] shrink-0">
        <div className="flex w-[141px] shrink-0 flex-col pt-px">
          {tree.map(({ label, icon, root }, i) => (
            <div key={i} className={clsx('flex h-6 shrink-0 items-center tracking-[-0.03px] whitespace-nowrap', root ? 'pl-[33px]' : 'pl-[41px]')}>
              <span className="mr-[5px] flex w-4 shrink-0 justify-center">{icon}</span>
              {label}
            </div>
          ))}
        </div>
        <div className="flex w-4 shrink-0 flex-col items-center bg-[#f0f0f0] pr-px">
          <Chevron d="M1 5l4-4 4 4" className="mt-[8px] h-[5px] w-[9px] text-[#555]" w={2} />
          <div className="-mr-px mt-[160px] h-[119px] w-[15px] bg-[#cdcdcd]" />
          <Chevron className="mt-auto mb-1.5 h-[5px] w-[9px] text-[#555]" w={2} />
        </div>
        <div className="flex grow flex-col pr-2 pl-2.5">
          <div className="mt-2.5 flex h-5 items-center">
            <Chevron className="h-[7px] w-[11px] text-[#777]" w={1.100} />
            <span className="ml-[3px] text-[14.2px] whitespace-nowrap text-[#1e3287]">Frequent folders (4)</span>
            <span className="ml-2 h-px grow bg-[#e2e2e2]" />
          </div>
          <div className="mt-3.5 grid grid-cols-[228px_228px] gap-y-4 pl-[36px]">
            {folders.map(({ name, badge }) => (
              <div key={name} className="flex h-12">
                <div className="pt-1">
                  <Folder>{badge}</Folder>
                </div>
                <div className="ml-[5px] flex flex-col leading-4">
                  <span>{name}</span>
                  <span className="text-[#6d6d6d]">This PC</span>
                  <Pin className="mt-0.5 ml-px size-[11px] text-[#87908f]" />
                </div>
              </div>
            ))}
          </div>
        </div>
      </div>

      <div className="flex h-6 shrink-0 items-center justify-between pr-[9px] pl-[15px] text-[#1e395b]">
        <span>4 items</span>
        <div className="-mt-1 flex items-center gap-[7px]">
          <svg viewBox="0 0 16 13" className="h-[13px] w-4" stroke="#777" fill="none">
            <rect x=".5" y=".5" width="4" height="12" />
            <path d="M1 4.500h3M1 8.500h3" />
            <path d="M6 2.500h10M6 6.500h10M6 10.500h10" strokeDasharray="4 1.500" />
          </svg>
          <PictureIcon className="h-3 w-3.5" />
        </div>
      </div>
    </div>
  )
}

/* ---------- taskbar ---------- */

function TaskItem({ children, active, open }: { children: ReactNode; active?: boolean; open?: boolean }) {
  return (
    <div className={clsx('flex h-10 w-12 flex-col items-center', active && 'bg-[#34474f]')}>
      <span className="flex h-[38px] items-center pt-0.5">{children}</span>
      <span className={clsx('h-0.5', active ? 'w-12 bg-[#76b9ed]' : 'w-[38px]', open && 'bg-[#76b9ed]')} />
    </div>
  )
}

function Taskbar() {
  return (
    <div className="absolute inset-x-0 bottom-0 flex h-10 justify-between bg-linear-to-r from-[#01171e] via-[#010f1b] to-[#020b1c] text-white">
      <div className="flex">
        <div className="flex w-12 items-center justify-center">
          <svg viewBox="0 0 16 16" className="size-4" fill="#fff">
            <path d="M0 2.200l6.500-.9v6.200H0zM7.300 1.200L16 0v7.500H7.300zM0 8.300h6.500v6.200L0 13.600zM7.300 8.300H16V16l-8.700-1.200z" />
          </svg>
        </div>
        <div className="flex w-[288px] items-center border border-[#c4c7c8] bg-[#f2f2f2] pl-[11px] text-[13.9px] text-[#333]">
          <svg viewBox="0 0 17 17" className="size-[17px]">
            <circle cx="10.500" cy="6" r="5.200" fill="none" stroke="#222" strokeWidth="1.300" />
            <path d="M6.800 9.800L.6 16" stroke="#222" strokeWidth="1.500" />
          </svg>
          <span className="ml-[11px] pt-0.5">Type here to search</span>
        </div>
        <TaskItem>
          <svg viewBox="0 0 16 16" className="size-4" fill="none" stroke="#eee" strokeWidth="1.200">
            <path d="M1 0v2.500h9V0M1 16v-2.500h9V16M1 5h9v6H1zM14 0v3.500M14 8v8" />
            <path d="M12.500 5.800h3" strokeWidth="2" />
          </svg>
        </TaskItem>
        <div className="ml-[3px] flex gap-px">
          <TaskItem open>
            <svg viewBox="0 0 24 24" className="size-6">
              <circle cx="12" cy="12" r="11.500" fill="#1583d2" />
              <path d="M1 9Q3 .5 12 .5T23.500 12q0 4-4.500 4-4 0-4-2 1-1 1-2.500Q16 8 11 8 4 8 1 13z" fill="#3cc5a4" />
              <path d="M1 9Q3 .5 12 .5q3 0 6 2Q9 4 1 13z" fill="#2aa9dd" />
              <path d="M9 9q-3 4 0 8.500t9 2.500q1 0 3-1.500Q18 23.500 12 23.500 5 22 4.500 16T9 9z" fill="#0c59a4" />
              <path d="M12 9.500q-3 2-1.500 5.500 2.500 4 9 2.500l2-1-.5-1q-5 1-6-1 1-1 .8-2.500-.8-2.500-3.800-2.500z" fill="#01171e" />
            </svg>
          </TaskItem>
          <TaskItem active>
            <ExplorerIcon className="h-[19px] w-[21px]" />
          </TaskItem>
          <TaskItem>
            <svg viewBox="0 0 22 23" className="h-[23px] w-[22px]">
              <path d="M2 5l1-2 2 3 4-1 2-1 3-4q1 3 3 4 5 3 5 9 0 10-11 10T0 13Q0 8 2 5z" fill="#ff6a2b" />
              <path d="M14 0q1 3 3 4 5 3 5 9 0 4-3 7 1-8-3-10t-3-6z" fill="#ffc93a" />
              <path d="M1 16q3 7 10 7t10-6q-4 4-9 3T6 14z" fill="#f0246c" />
              <circle cx="11" cy="12" r="4.800" fill="#7b47d8" />
              <path d="M5 8q3-1 6 1l2 1q-2 1-3.500 1T8 14q-3-2-3-6z" fill="#ff9a2e" />
            </svg>
          </TaskItem>
          <TaskItem open>
            <WinRar className="size-6" />
          </TaskItem>
        </div>
      </div>
      <div className="flex items-center pr-[25px]">
        <Chevron d="M0 5.500l5-5 5 5" w={1} className="h-[7px] w-3" />
        <svg viewBox="0 0 14 18" className="ml-[13px] h-[17px] w-[13px]" fill="none" stroke="#eee" strokeWidth="1.200">
          <rect x="1" y="5" width="8" height="8" rx="1.500" />
          <path d="M9 8l3.500-2v6L9 10M3 2.500Q6 0 10 2.500M3 15.500q3 2.500 7 0" />
        </svg>
        <svg viewBox="0 0 17 14" className="ml-[9px] h-3.5 w-[17px]" fill="none" stroke="#eee" strokeWidth="1.100">
          <path d="M5 1.500h11.500v8H5M8 13.500h6M11 9.500v4M.5.5h4v4h-4zM2.500 4.500V13h4" />
        </svg>
        <svg viewBox="0 0 17 14" className="ml-[7px] h-3.5 w-[17px]" fill="none" stroke="#eee" strokeWidth="1.100">
          <path d="M.5 4.500H3l3.500-3.500v12L3 9.500H.5zM9 4.500q1.500 2.500 0 5M11.500 2.500q3 4.500 0 9M14 .8q4 6.200 0 12.400" />
        </svg>
        <div className="ml-[9px] w-[52px] text-center text-[11.4px] leading-[18px] tracking-[-0.25px] whitespace-nowrap">
          <div>1:41 AM</div>
          <div>1/10/2025</div>
        </div>
        <svg viewBox="0 0 16 16" className="ml-[18px] size-4">
          <path d="M.6.6h14.800v11.400H10.500L8 14.800 5.500 12H.6z" fill="none" stroke="#eee" strokeWidth="1.200" />
        </svg>
      </div>
    </div>
  )
}

function Watermark() {
  return (
    <svg viewBox="0 0 200 64" className="absolute top-[608px] left-[1038px] h-16 w-[200px] opacity-50" fill="#d8dade">
      <g fontFamily="Roboto, sans-serif" fontSize="52">
        <text x="1" y="51" textLength="62" lengthAdjust="spacingAndGlyphs">ANY</text>
        <text x="131" y="51" textLength="62" lengthAdjust="spacingAndGlyphs">RUN</text>
      </g>
      <path d="M84 11V4l40 26v5L84 60V54M80 11q-6-3-6 2v40q0 5 6 1l36-20q4-3 0-5L88 15v32" fill="none" stroke="#d8dade" strokeWidth="4.500" strokeLinejoin="round" strokeLinecap="round" />
    </svg>
  )
}

export default function App() {
  return (
    <div className="relative h-[720px] w-[1280px] overflow-hidden bg-[#f7f7f7] font-['Open_Sans','DejaVu_Sans',sans-serif]">
      <Edge />
      <DownloadsFlyout />
      <WinRarWindow />
      <Explorer />
      <Watermark />
      <Taskbar />
    </div>
  )
}
